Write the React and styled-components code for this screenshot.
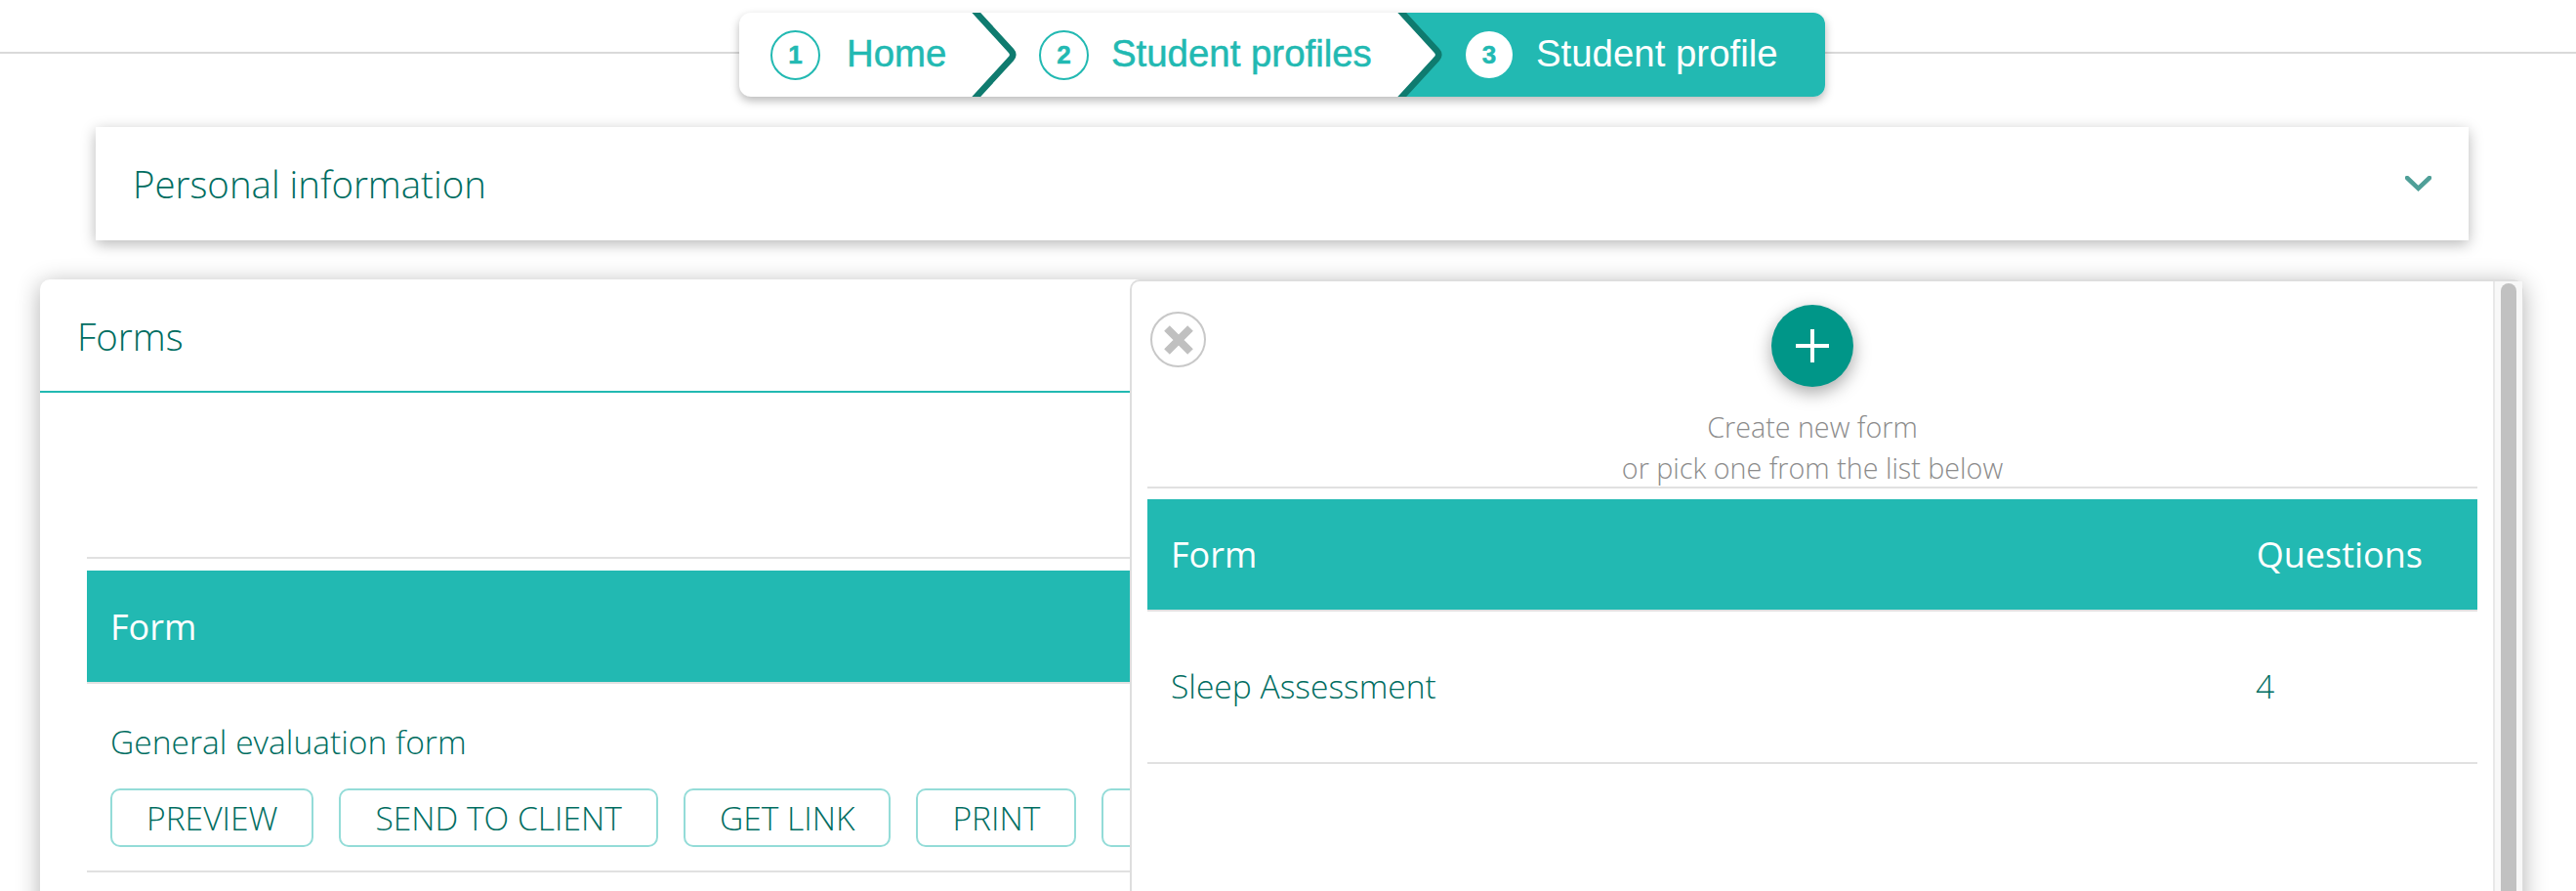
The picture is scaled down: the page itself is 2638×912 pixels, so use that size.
import React from "react";
import styled, { createGlobalStyle } from "styled-components";

const Global = createGlobalStyle`
  html, body { margin: 0; padding: 0; background: #fff; height: 912px; overflow: hidden; }
  body { font-family: "Open Sans", "Liberation Sans", sans-serif; font-weight: 300; color: #006d61; }
`;
const Page = styled.div`
  position: relative;
  width: 2638px;
  height: 912px;
  overflow: hidden;
  background: #fff;
`;
const StepperBar = styled.div`
  display: flex;
  justify-content: center;
  padding: 13px 12px 0 0;
  background: linear-gradient(#d9d9d9, #d9d9d9) 0 53px / 100% 2px no-repeat;
  height: 86px;
`;
const Stepper = styled.nav`
  display: flex;
  height: 86px;
  border-radius: 12px;
  background: #fff;
  box-shadow: 0 4px 10px rgba(0, 0, 0, 0.28);
  font-family: "Liberation Sans", Arial, sans-serif;
  font-weight: 400;
`;
const Step = styled.div`
  position: relative;
  display: flex;
  align-items: center;
  flex: none;
  gap: ${p => p.$gap}px;
  width: ${p => p.$width}px;
  box-sizing: border-box;
  font-size: 38.4px;
  color: ${p => (p.$active ? "#fff" : "#22b9b2")};
  -webkit-text-stroke: ${p => (p.$active ? "0" : "0.5px #22b9b2")};
  background: ${p => (p.$active ? "#22b9b2" : "transparent")};
  border-radius: ${p => (p.$active ? "0 12px 12px 0" : "0")};
  margin-left: ${p => (p.$active ? "-40px" : "0")};
  padding-left: ${p => (p.$active ? "73px" : "32px")};
  z-index: ${p => (p.$active ? 0 : 1)};
`;
const StepNum = styled.span`
  display: flex;
  align-items: center;
  justify-content: center;
  flex: none;
  width: ${p => (p.$active ? 48 : 51)}px;
  height: ${p => (p.$active ? 48 : 51)}px;
  box-sizing: border-box;
  border-radius: 50%;
  border: ${p => (p.$active ? "0" : "2px solid #22b9b2")};
  font-size: 26px;
  font-weight: 700;
  -webkit-text-stroke: 0.5px #22b9b2;
  color: #22b9b2;
  background: ${p => (p.$active ? "#fff" : "transparent")};
`;
const StepLabel = styled.span`
  margin-bottom: 3px;
`;
const ChevronSvg = styled.svg`
  position: absolute;
  top: 0;
  right: -12px;
  width: 52px;
  height: 86px;
`;
const Chevron = () => (
  <ChevronSvg viewBox="0 0 52 86">
    <path d="M0 0H5L46 43L5 86H0Z" fill="#fff" />
    <path d="M5 -3L43.5 39Q47 43 43.5 47L5 89" fill="none" stroke="#0f7b6f" strokeWidth="6.5" />
  </ChevronSvg>
);
const Accordion = styled.section`
  display: flex;
  align-items: center;
  justify-content: space-between;
  margin: 31px 110px 0 98px;
  height: 116px;
  padding: 0 38px;
  background: #fff;
  box-shadow: 0 4px 14px rgba(0, 0, 0, 0.28);
`;
const AccordionTitle = styled.h2`
  margin: 0;
  font-size: 38.4px;
  font-weight: 300;
  color: #006d61;
`;
const FormsCard = styled.section`
  margin: 40px 54px 0 41px;
  height: 700px;
  background: #fff;
  border-radius: 10px;
  box-shadow: 0 4px 24px rgba(0, 0, 0, 0.3);
`;
const CardHeader = styled.header`
  display: flex;
  align-items: center;
  height: 112px;
  padding: 2px 0 0 38px;
  border-bottom: 2px solid #22b9b2;
  font-size: 38.4px;
  color: #006d61;
`;
const CardBody = styled.div`
  padding: 168px 0 0 48px;
`;
const Rule = styled.hr`
  margin: 0;
  border: 0;
  height: 2px;
  background: #e1e1e1;
`;
const TableHead = styled.div`
  display: flex;
  align-items: center;
  justify-content: space-between;
  margin-top: ${p => p.$top}px;
  height: ${p => p.$height}px;
  padding: 0 56px 0 24px;
  background: #22b9b2;
  box-shadow: 0 2px 0 #e1e1e1;
  color: #fff;
  font-size: 36px;
  font-weight: 400;
`;
const FormRow = styled.div`
  padding: 39px 24px 0;
  height: 195px;
  box-sizing: border-box;
  border-bottom: 2px solid #e1e1e1;
`;
const FormName = styled.div`
  font-size: 33.6px;
  line-height: 44px;
  color: #006d61;
`;
const Actions = styled.div`
  display: flex;
  gap: 26px;
  margin-top: 26px;
`;
const ActionButton = styled.button`
  flex: none;
  height: 60px;
  padding: 0 35px;
  background: #fff;
  border: 2px solid #94dcd8;
  border-radius: 10px;
  font: 300 33.6px "Open Sans", sans-serif;
  color: #006d61;
`;
const Drawer = styled.aside`
  position: absolute;
  left: 1157px;
  top: 286px;
  width: 1427px;
  height: 640px;
  box-sizing: border-box;
  display: flex;
  background: #fff;
  border: solid #dedede;
  border-width: 2px 1px 0 2px;
  border-radius: 10px 10px 0 0;
`;
const DrawerMain = styled.div`
  position: relative;
  flex: 1;
  padding: 0 16px;
`;
const Scrollbar = styled.div`
  flex: none;
  width: 30px;
  background: #f8f8f8;
  border-left: 2px solid #e8e8e8;
  box-sizing: border-box;
  padding: 2px 6px 0 6px;
`;
const ScrollThumb = styled.div`
  height: 100%;
  background: #c1c1c1;
  border-radius: 8px;
`;
const CloseButton = styled.button`
  position: absolute;
  left: 19px;
  top: 31px;
  width: 57px;
  height: 57px;
  padding: 0;
  display: flex;
  align-items: center;
  justify-content: center;
  background: #fff;
  border: 2px solid #c8c8c8;
  border-radius: 50%;
`;
const CreateArea = styled.div`
  display: flex;
  flex-direction: column;
  align-items: center;
  padding-top: 24px;
`;
const AddButton = styled.button`
  width: 84px;
  height: 84px;
  padding: 0;
  display: flex;
  align-items: center;
  justify-content: center;
  border: 0;
  border-radius: 50%;
  background: #009688;
  box-shadow: 0 6px 18px rgba(0, 0, 0, 0.35);
`;
const CreateText = styled.p`
  margin: 20px 0 -2px;
  text-align: center;
  font-size: 28.7px;
  line-height: 42px;
  color: #8c8c8c;
`;
const PickRow = styled.div`
  display: flex;
  align-items: center;
  height: 156px;
  padding: 0 24px;
  border-bottom: 2px solid #e1e1e1;
  font-size: 33.6px;
  color: #006d61;
`;
const PickName = styled.span`
  flex: 1;
`;
const PickCount = styled.span`
  width: 203px;
`;

const buttons = ["PREVIEW", "SEND TO CLIENT", "GET LINK", "PRINT", "DELETE"];

export default function App() {
  return (
    <Page>
      <Global />
      <StepperBar>
        <Stepper>
          <Step $width={275} $gap={27}>
            <StepNum>1</StepNum><StepLabel>Home</StepLabel><Chevron />
          </Step>
          <Step $width={436} $gap={23}>
            <StepNum>2</StepNum><StepLabel>Student profiles</StepLabel><Chevron />
          </Step>
          <Step $width={441} $gap={24} $active>
            <StepNum $active>3</StepNum><StepLabel>Student profile</StepLabel>
          </Step>
        </Stepper>
      </StepperBar>
      <Accordion>
        <AccordionTitle>Personal information</AccordionTitle>
        <svg width="27" height="17" viewBox="0 0 27 17">
          <path d="M2 2L13.5 13L25 2" fill="none" stroke="#4f9f98" strokeWidth="4.5" strokeLinecap="round" />
        </svg>
      </Accordion>
      <FormsCard>
        <CardHeader>Forms</CardHeader>
        <CardBody>
          <Rule />
          <TableHead $top={12} $height={114}>Form</TableHead>
          <FormRow>
            <FormName>General evaluation form</FormName>
            <Actions>
              {buttons.map(b => <ActionButton key={b}>{b}</ActionButton>)}
            </Actions>
          </FormRow>
        </CardBody>
      </FormsCard>
      <Drawer>
        <DrawerMain>
          <CloseButton aria-label="Close">
            <svg width="36" height="36" viewBox="0 0 36 36">
              <path d="M6 6L30 30M30 6L6 30" stroke="#c0c0c0" strokeWidth="8" />
            </svg>
          </CloseButton>
          <CreateArea>
            <AddButton aria-label="Create new form">
              <svg width="36" height="36" viewBox="0 0 36 36">
                <path d="M18 1V35M1 18H35" stroke="#fff" strokeWidth="4" />
              </svg>
            </AddButton>
            <CreateText>Create new form<br />or pick one from the list below</CreateText>
          </CreateArea>
          <Rule />
          <TableHead $top={11} $height={113}>
            <span>Form</span><span>Questions</span>
          </TableHead>
          <PickRow>
            <PickName>Sleep Assessment</PickName>
            <PickCount>4</PickCount>
          </PickRow>
        </DrawerMain>
        <Scrollbar><ScrollThumb /></Scrollbar>
      </Drawer>
    </Page>
  );
}
